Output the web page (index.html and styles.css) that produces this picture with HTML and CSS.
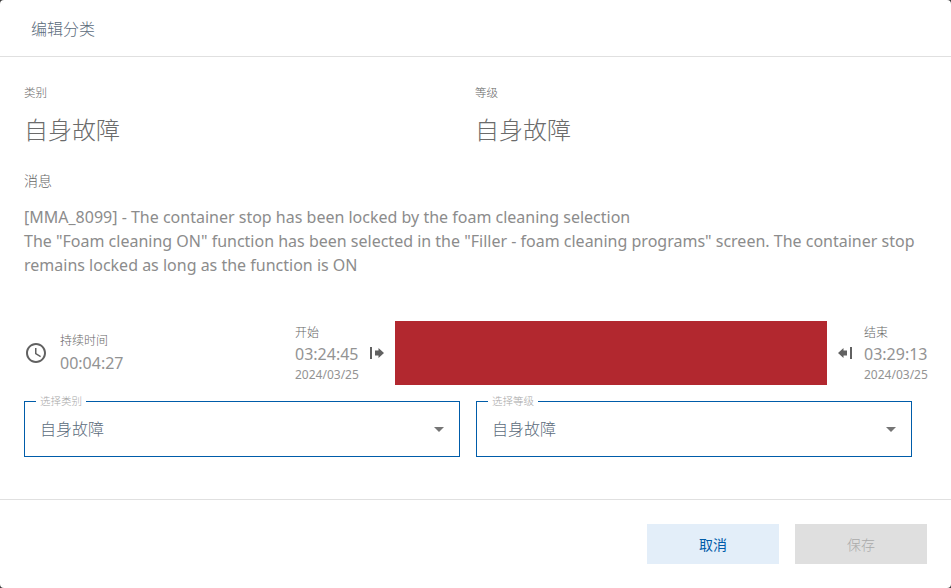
FILE: index.html
```html
<!DOCTYPE html>
<html lang="zh-CN">
<head>
<meta charset="utf-8">
<title>编辑分类</title>
<link rel="stylesheet" href="styles.css">
</head>
<body>
<div class="dialog">
  <header class="head">编辑分类</header>
  <main class="content">
    <div class="pair">
      <div class="col">
        <div class="small-label">类别</div>
        <div class="big-value">自身故障</div>
      </div>
      <div class="col">
        <div class="small-label">等级</div>
        <div class="big-value">自身故障</div>
      </div>
    </div>
    <div class="msg-label">消息</div>
    <p class="msg">[MMA_8099] - The container stop has been locked by the foam cleaning selection<br>The "Foam cleaning ON" function has been selected in the "Filler - foam cleaning programs" screen. The container stop remains locked as long as the function is ON</p>
    <div class="timeline">
      <div class="duration">
        <svg class="clock" viewBox="0 0 24 24" width="24" height="24"><path fill="#616161" d="M11.99 2C6.47 2 2 6.48 2 12s4.47 10 9.99 10C17.52 22 22 17.52 22 12S17.52 2 11.99 2zM12 20c-4.420 0-8-3.580-8-8s3.580-8 8-8 8 3.580 8 8-3.580 8-8 8zm.5-13H11v6l5.250 3.150.75-1.230-4.500-2.670z"/></svg>
        <div class="dur-text">
          <div class="t-label">持续时间</div>
          <div class="t-time">00:04:27</div>
        </div>
      </div>
      <div class="stamp">
        <div class="t-label">开始</div>
        <div class="t-time">03:24:45</div>
        <div class="t-date">2024/03/25</div>
      </div>
      <svg class="arrow arrow-start" viewBox="0 0 14 12" width="14" height="12"><path fill="#616161" d="M0 0h2v12H0zM5 3.500h3.500V1l5.500 5-5.500 5V8.500H5z"/></svg>
      <div class="bar"></div>
      <svg class="arrow arrow-end" viewBox="0 0 14 12" width="14" height="12"><path fill="#616161" d="M14 0h-2v12h2zM9 3.500H5.500V1L0 6l5.500 5V8.500H9z"/></svg>
      <div class="stamp stamp-end">
        <div class="t-label">结束</div>
        <div class="t-time">03:29:13</div>
        <div class="t-date">2024/03/25</div>
      </div>
    </div>
    <div class="selects">
      <fieldset class="select">
        <legend>选择类别</legend>
        <span class="sel-value">自身故障</span>
        <span class="caret"></span>
      </fieldset>
      <fieldset class="select">
        <legend>选择等级</legend>
        <span class="sel-value">自身故障</span>
        <span class="caret"></span>
      </fieldset>
    </div>
  </main>
  <footer class="foot">
    <button class="btn btn-cancel">取消</button>
    <button class="btn btn-save" disabled>保存</button>
  </footer>
</div>
</body>
</html>
```
FILE: styles.css
```css
* { box-sizing: border-box; }
html, body { margin: 0; height: 100%; }
body {
  background: #3a3a3a;
  font-family: "Noto Sans", "Noto Sans CJK SC", sans-serif;
  overflow: hidden;
}
.dialog {
  width: 951px;
  height: 588px;
  background: #fff;
  border-radius: 4px;
  display: flex;
  flex-direction: column;
}
.head {
  height: 57px;
  flex: none;
  border-bottom: 1px solid #e0e0e0;
  padding: 18px 31px 0;
  font-size: 16px;
  line-height: 22px;
  font-weight: 300;
  color: #5b6b7b;
}
.content {
  flex: 1;
  padding: 28px 24px 0;
  display: flex;
  flex-direction: column;
}
.pair { display: flex; }
.col { width: 451px; }
.small-label {
  font-size: 11.5px;
  line-height: 16px;
  font-weight: 300;
  color: #666;
}
.big-value {
  font-size: 24px;
  line-height: 32px;
  margin-top: 13px;
  font-weight: 300;
  color: #6b6b6b;
}
.msg-label {
  margin-top: 25px;
  font-size: 14px;
  line-height: 20px;
  font-weight: 300;
  color: #666;
}
.msg {
  margin: 14px 0 0;
  font-size: 16px;
  line-height: 24px;
  color: #8c8c8c;
  width: 903px;
}
.timeline {
  margin-top: 44px;
  height: 64px;
  display: flex;
  align-items: center;
}
.duration {
  width: 271px;
  display: flex;
  align-items: center;
  gap: 12px;
}
.clock { flex: none; }
.dur-text { display: flex; flex-direction: column; }
.t-label { font-size: 12px; line-height: 16px; font-weight: 300; color: #666; }
.t-time { font-size: 16px; line-height: 22px; margin-top: 3px; color: #939393; }
.t-date { font-size: 12px; line-height: 16px; margin-top: 2px; color: #939393; }
.stamp { flex: none; width: 64px; padding-top: 1px; }
.stamp .t-time { margin-top: 2px; }
.stamp-end { width: 63px; }
.arrow { flex: none; }
.arrow-start { margin: 0 11px 0 11px; }
.arrow-end { margin: 0 12px 0 11px; }
.bar { flex: 1; height: 64px; background: #b2282f; }
.selects {
  display: flex;
  gap: 16px;
  margin-top: 10px;
}
.select {
  width: 436px;
  height: 62px;
  margin: 0;
  padding: 0 15px 6px;
  border: 1px solid #005ca9;
  border-radius: 0;
  display: flex;
  align-items: center;
  justify-content: space-between;
  min-width: 0;
}
.select legend {
  font-size: 10.5px;
  line-height: 12px;
  font-weight: 300;
  color: #a8a8a8;
  padding: 0 4px;
  margin-left: -4px;
}
.sel-value { font-size: 16px; line-height: 24px; font-weight: 300; color: #5b6b7b; }
.caret {
  width: 0;
  height: 0;
  margin-top: 2px;
  border-left: 5px solid transparent;
  border-right: 5px solid transparent;
  border-top: 5px solid #757575;
}
.foot {
  height: 89px;
  flex: none;
  border-top: 1px solid #e0e0e0;
  padding: 24px 24px 0;
  display: flex;
  justify-content: flex-end;
  gap: 16px;
}
.btn {
  width: 132px;
  height: 40px;
  border: 0;
  font-family: inherit;
  font-size: 14px;
  font-weight: 300;
  padding: 0;
}
.btn-cancel { background: #e3eef9; color: #005ca9; font-weight: 400; }
.btn-save { background: #dfdfdf; color: #aaa; }
```
